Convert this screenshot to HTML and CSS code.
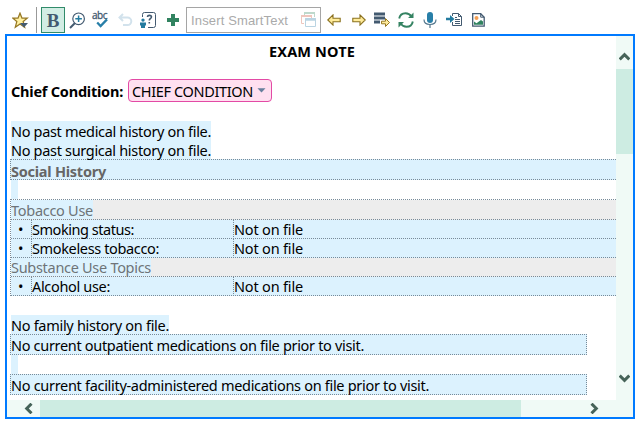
FILE: index.html
```html
<!DOCTYPE html>
<html lang="en">
<head>
<meta charset="utf-8">
<title>Exam Note</title>
<link rel="stylesheet" href="styles.css">
</head>
<body>
<div class="toolbar">
  <svg class="icon star" width="18" height="18" viewBox="0 0 18 18"><path d="M8 1.200l2 5h5.200l-4 3.400 1.400 5.600L8 12l-4.700 3.200 1.500-5.600-4-3.400H6z" fill="#fff0a0" stroke="#967824" stroke-width="1.300"/><path d="M8 11h8l-4 4.500z" fill="#435a70"/></svg>
  <span class="divider"></span>
  <span class="bold">B</span>
  <svg class="icon zoom" width="17" height="17" viewBox="0 0 17 17"><path d="M6.500 10.500L1 16" stroke="#435a70" stroke-width="2"/><circle cx="9.600" cy="6.800" r="5.800" fill="#fff" stroke="#435a70" stroke-width="1.200"/><path d="M9.600 3.500v6.600M6.300 6.800h6.600" stroke="#237b9f" stroke-width="1.500"/></svg>
  <span class="spell">abc<svg width="12" height="10" viewBox="0 0 12 10"><path d="M1.200 4.500L4.600 8 11 1.400" fill="none" stroke="#287fa8" stroke-width="2.300"/></svg></span>
  <svg class="icon undo" width="15" height="14" viewBox="0 0 15 14"><path d="M5 1L1.500 4.500 5 8M2 4.500h7.500a3.800 3.800 0 0 1 0 7.600H5" fill="none" stroke="#d2e2ec" stroke-width="2"/></svg>
  <svg class="icon help" width="17" height="17" viewBox="0 0 17 17"><path d="M2.500 5V2.500q0-2 2-2h9q2 0 2 2v11q0 2-2 2H8" fill="none" stroke="#435a70"/><path d="M7.400 5q.2-1.600 2-1.600c2.700 0 2.600 2.400.8 3.300q-.9.500-.9 1.800M9.300 10v1.600" fill="none" stroke="#435a70" stroke-width="1.600"/><circle cx="3" cy="8.100" r="1.700" fill="#237b9f"/><path d="M0 10.500h6v3H5V16H1v-2.500H0z" fill="#237b9f"/></svg>
  <svg class="icon plus" width="12" height="12" viewBox="0 0 12 12"><path d="M4 0h4v4h4v4H8v4H4V8H0V4h4z" fill="#318360"/></svg>
  <div class="search"><span class="placeholder">Insert SmartText</span>
    <svg width="15" height="16" viewBox="0 0 15 16"><path d="M3.500 3V.5h10V5" fill="none" stroke="#bed9cc"/><path d="M3 1h11" stroke="#bed9cc" stroke-width="2"/><path d="M3 11.500H.5v-8h10V6" fill="none" stroke="#efc6bd"/><path d="M0 4h11" stroke="#efc6bd" stroke-width="2"/><path d="M4.500 6.500h10v8h-10z" fill="#fff" stroke="#bad4e2"/><path d="M4 7.500h11" stroke="#bad4e2" stroke-width="2.500"/></svg>
  </div>
  <svg class="icon back" width="14" height="12" viewBox="0 0 14 12"><path d="M.8 6L6 .9v3.300h7.200v3.600H6v3.300z" fill="#ffeb9a" stroke="#8b711f" stroke-width="1.100"/></svg>
  <svg class="icon next" width="14" height="12" viewBox="0 0 14 12"><path d="M13.200 6L8 .9v3.300H.8v3.600H8v3.300z" fill="#ffeb9a" stroke="#8b711f" stroke-width="1.100"/></svg>
  <svg class="icon list" width="17" height="16" viewBox="0 0 17 16"><path d="M0 2h11M0 6h11M0 10h6" stroke="#435a70" stroke-width="3"/><path d="M15.500 10.500L11.500 6.500v2.700H7.500v2.600h4v2.700z" fill="#ffeb9a" stroke="#967824"/></svg>
  <svg class="icon refresh" width="16" height="16" viewBox="0 0 16 16"><path d="M1.200 6.500C1.800 3 4.300 1.200 7.500 1.200q3.700 0 6 3.300M14.800 9.500c-.6 3.500-3.100 5.300-6.300 5.300q-3.700 0-6-3.300" fill="none" stroke="#358362" stroke-width="1.900"/><path d="M15.500 0.500v5.500H10zM.5 15.500V10H6z" fill="#358362"/></svg>
  <svg class="icon mic" width="15" height="16" viewBox="0 0 15 16"><rect x="4" y="0" width="6" height="11" rx="3" fill="#287fa8"/><path d="M1 7.500c0 3 2 5 6 5s6-2 6-5M7 12.500V16" fill="none" stroke="#54778d" stroke-width="1.200"/></svg>
  <svg class="icon import" width="17" height="15" viewBox="0 0 17 15"><path d="M6.500 4V1.500h6l3 3v9h-9V10" fill="#fff" stroke="#435a70"/><path d="M12.500 1.500v3h3M9 5.500h2M9 7.500h5M9 9.500h5M9 11.500h5" fill="none" stroke="#435a70"/><path d="M8.500 7L4 3v2.700H0v2.600h4V11z" fill="#237b9f"/></svg>
  <svg class="icon picture" width="13" height="14" viewBox="0 0 13 14"><path d="M.7.700h8l3.500 3.500v9H.7z" fill="#fff" stroke="#435a70" stroke-width="1.300"/><path d="M8.700.700v3.500h3.500" fill="none" stroke="#435a70"/><circle cx="4.500" cy="5" r="2" fill="#f5a054"/><path d="M2 11.800V8.500l2.500 1.800L9 7l2 1.500v3.300z" fill="#318360"/></svg>
</div>

<div class="editor">
  <div class="page">
    <h1><span class="t-title">EXAM NOTE</span></h1>
    <div class="chief"><div class="label"><b class="t-chief">Chief Condition:</b></div>
      <span class="chip"><span class="t-chip">CHIEF CONDITION</span><svg width="9" height="5" viewBox="0 0 9 5"><path d="M.5.300h8L4.500 4.500z" fill="#687f9d"/></svg></span>
    </div>
    <div class="line"><span class="mark w200"><span class="t-med">No past medical history on file.</span></span></div>
    <div class="line"><span class="mark w200"><span class="t-surg">No past surgical history on file.</span></span></div>
    <div class="social"><b class="t-social">Social History</b></div>
    <div class="gap"></div>
    <div class="table">
      <div class="row heading tall"><span class="mark w82"><span class="t-tob">Tobacco Use</span></span></div>
      <div class="row"><span class="bullet">•</span><span class="cell"><span class="t-smoking">Smoking status:</span></span><span class="cell"><span class="t-not">Not on file</span></span></div>
      <div class="row"><span class="bullet">•</span><span class="cell"><span class="t-smokeless">Smokeless tobacco:</span></span><span class="cell"><span class="t-not">Not on file</span></span></div>
      <div class="row heading"><span class="mark w140"><span class="t-sub">Substance Use Topics</span></span></div>
      <div class="row"><span class="bullet">•</span><span class="cell"><span class="t-alc">Alcohol use:</span></span><span class="cell"><span class="t-not">Not on file</span></span></div>
    </div>
    <div class="line family"><span class="mark w158"><span class="t-fam">No family history on file.</span></span></div>
    <div class="box"><span class="t-out">No current outpatient medications on file prior to visit.</span></div>
    <div class="gap"></div>
    <div class="box"><span class="t-fac">No current facility-administered medications on file prior to visit.</span></div>
  </div>
  <div class="vscroll">
    <svg width="11" height="9" viewBox="0 0 11 9"><path d="M.7 7.500L5.500 2.700l4.800 4.800" fill="none" stroke="#466359" stroke-width="3"/></svg>
    <div class="vthumb"></div>
    <svg class="down" width="11" height="9" viewBox="0 0 11 9"><path d="M.7 1.500l4.800 4.800 4.800-4.800" fill="none" stroke="#466359" stroke-width="3"/></svg>
  </div>
  <div class="hscroll">
    <svg width="9" height="11" viewBox="0 0 9 11"><path d="M7.500.700L2.700 5.500l4.800 4.800" fill="none" stroke="#466359" stroke-width="3"/></svg>
    <div class="hthumb"></div>
    <svg class="right" width="9" height="11" viewBox="0 0 9 11"><path d="M1.500.700l4.800 4.800-4.800 4.800" fill="none" stroke="#466359" stroke-width="3"/></svg>
  </div>
</div>
<script src="fit.js"></script>
</body>
</html>
```
FILE: styles.css
```css
* { box-sizing: border-box; }
body { margin: 0; width: 640px; height: 425px; overflow: hidden; background: #fff; color: #000; font: 14.5px/20px "Noto Sans", "Open Sans", sans-serif; }
svg { display: block; flex: none; }
.toolbar { height: 34px; display: flex; align-items: flex-start; padding-left: 12px; }
.star { margin-top: 12px; }
.divider { width: 1px; height: 26px; margin: 7px 4px 0 6px; background: #999; }
.bold { width: 24px; height: 26px; margin-top: 7px; border: 1px solid #318b6a; background: #d2ede4; color: #435a70; font: bold 19px/25px "Liberation Serif", serif; text-align: center; }
.zoom { margin: 12px 0 0 4px; }
.spell { width: 17px; height: 17px; margin: 11px 0 0 6px; color: #435a70; font: 10px/9px "Open Sans", sans-serif; letter-spacing: -.5px; -webkit-text-stroke: .3px #435a70; }
.spell svg { margin: -2px 0 0 4px; }
.undo { margin: 13px 0 0 9px; }
.help { margin: 12px 0 0 7px; }
.plus { margin: 14px 0 0 10px; }
.search { display: flex; width: 135px; height: 26px; margin: 7px 0 0 7px; border: 1px solid #a5a5a5; padding-left: 4px; color: #aaa; font: 13px/25px "Liberation Sans", sans-serif; letter-spacing: .15px; }
.placeholder { width: 110px; white-space: nowrap; }
.search svg { margin-top: 4px; }
.back { margin: 14px 0 0 6px; }
.next { margin: 14px 0 0 11px; }
.list { margin: 12px 0 0 8px; }
.refresh { margin: 12px 0 0 7px; }
.mic { margin: 12px 0 0 9px; }
.import { margin: 12px 0 0 8px; }
.picture { margin: 13px 0 0 9px; }

.editor { width: 630px; height: 385px; margin-left: 5px; border: 2px solid #007aff; display: grid; grid-template: 364px 17px / 609px 17px; background: #f0faf6; }
.page { background: #fff; padding-left: 3px; overflow: hidden; white-space: nowrap; }
h1 { margin: 6px 0 0; height: 37px; padding-left: 259px; font-size: 14.5px; line-height: 19px; }
.chief { display: flex; height: 42px; padding-left: 1px; line-height: 24px; }
.label { width: 117px; }
.chip { display: flex; align-items: center; justify-content: space-between; width: 144px; height: 23px; border: 1px solid #e34aa5; border-radius: 4px; background: #ffe0f0; padding: 0 5px 0 3px; }
.line { height: 19px; padding-left: 1px; }
.mark { display: block; height: 19px; background: #dcf2fe; }
.w200 { width: 200px; }
.w82 { width: 82px; }
.w140 { width: 140px; }
.w158 { width: 158px; }
.social { height: 21px; border: 1px dotted #788b99; border-right: 0; background: #dcf2fe; color: #666; line-height: 22px; }
.gap { width: 7px; height: 19px; margin-left: 1px; background: #dcf2fe; }
.table { border: 1px dotted #788b99; border-width: 1px 0 0 1px; }
.row { display: grid; grid-template-columns: 20px 202px 1fr; height: 19px; border-bottom: 1px dotted #788b99; background: #dcf2fe; line-height: 19px; }
.row .bullet { padding-left: 7px; }
.cell { border-left: 1px dotted #788b99; }
.heading { display: block; background: #ededed; color: #6e7478; }
.heading .mark { height: 18px; }
.tall { height: 20px; }
.tall .mark { height: 19px; line-height: 21px; }
.family { margin-top: 19px; }
.box { width: 577px; height: 21px; border: 1px dotted #788b99; background: #dcf2fe; line-height: 21px; }
.vscroll { background: #f0faf6; padding: 16px 0 0 3px; display: flex; flex-direction: column; }
.vthumb { width: 17px; height: 85px; margin: 8px 0 0 -3px; background: #cdece2; }
.down { margin-top: 220px; }
.hscroll { grid-column: 1 / 3; display: flex; align-items: center; padding-left: 17px; }
.hthumb { width: 481px; height: 17px; margin-left: 7px; background: #cdece2; }
.right { margin-left: 69px; }
[class^="t-"] { display: inline-block; }
```
FILE: fit.js
```js
// Track each label so that its run fills its designed line width.
const widths = {
  title: 86, chief: 112, chip: 121, med: 200, surg: 200, social: 95,
  tob: 82, smoking: 102, smokeless: 127, sub: 140, alc: 78, not: 69,
  fam: 158, out: 353, fac: 418
};
document.fonts.ready.then(() => {
  for (const [name, width] of Object.entries(widths)) {
    document.querySelectorAll('.t-' + name).forEach(el => {
      const natural = el.getBoundingClientRect().width;
      el.style.letterSpacing = (width - natural) / el.textContent.length + 'px';
    });
  }
});
```
